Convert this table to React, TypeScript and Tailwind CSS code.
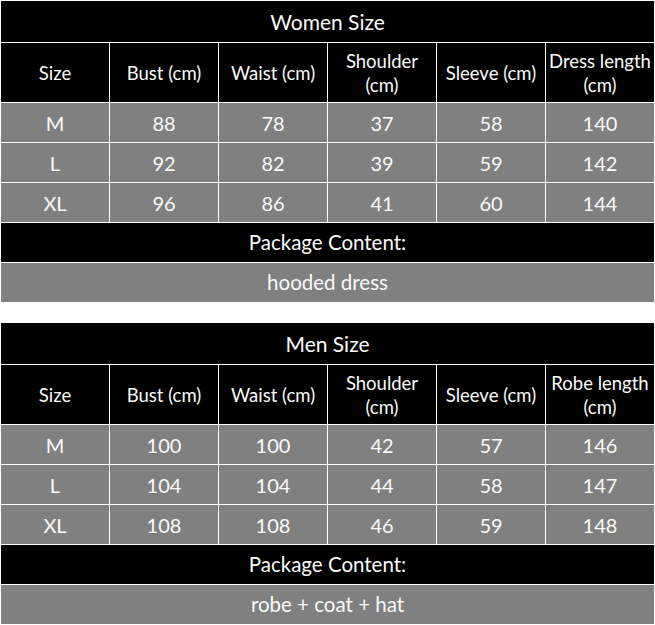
import React from "react";

type TableProps = {
  title: string;
  lengthLabel: string;
  rows: string[][];
  content: string;
};

function SizeTable({ title, lengthLabel, rows, content }: TableProps) {
  const headers = ["Size", "Bust (cm)", "Waist (cm)", "Shoulder (cm)", "Sleeve (cm)", lengthLabel + " (cm)"];
  return (
    <div className="grid grid-cols-6 gap-px bg-white p-px">
      <div className="col-span-6 h-[41px] bg-black flex items-center justify-center text-[21px] pt-px">{title}</div>
      {headers.map((h, i) => (
        <div
          key={i}
          className="h-[59px] bg-black flex items-center justify-center text-center leading-[24px] text-[18.5px] whitespace-nowrap"
        >
          {i === 3 || i === 5 ? (
            <span className="flex flex-col items-center">
              <span className="whitespace-nowrap">{h.replace(" (cm)", "")}</span>
              <span>(cm)</span>
            </span>
          ) : (
            h
          )}
        </div>
      ))}
      {rows.map((r, ri) =>
        r.map((c, ci) => (
          <div key={ri + "-" + ci} className="h-[39px] bg-[#808080] flex items-center justify-center text-[20px]">
            {c}
          </div>
        ))
      )}
      <div className="col-span-6 h-[39px] bg-black flex items-center justify-center text-[20.5px]">Package Content:</div>
      <div className="col-span-6 h-[39px] bg-[#808080] flex items-center justify-center text-[20.5px]">{content}</div>
    </div>
  );
}

export default function App() {
  return (
    <div
      className="w-[655px] h-[625px] bg-white text-[#fafafa] overflow-hidden flex flex-col gap-[19px]"
      style={{ fontFamily: "Lato, 'Open Sans', sans-serif" }}
    >
      <SizeTable
        title="Women Size"
        lengthLabel="Dress length"
        rows={[
          ["M", "88", "78", "37", "58", "140"],
          ["L", "92", "82", "39", "59", "142"],
          ["XL", "96", "86", "41", "60", "144"],
        ]}
        content="hooded dress"
      />
      <SizeTable
        title="Men Size"
        lengthLabel="Robe length"
        rows={[
          ["M", "100", "100", "42", "57", "146"],
          ["L", "104", "104", "44", "58", "147"],
          ["XL", "108", "108", "46", "59", "148"],
        ]}
        content="robe + coat + hat"
      />
    </div>
  );
}
